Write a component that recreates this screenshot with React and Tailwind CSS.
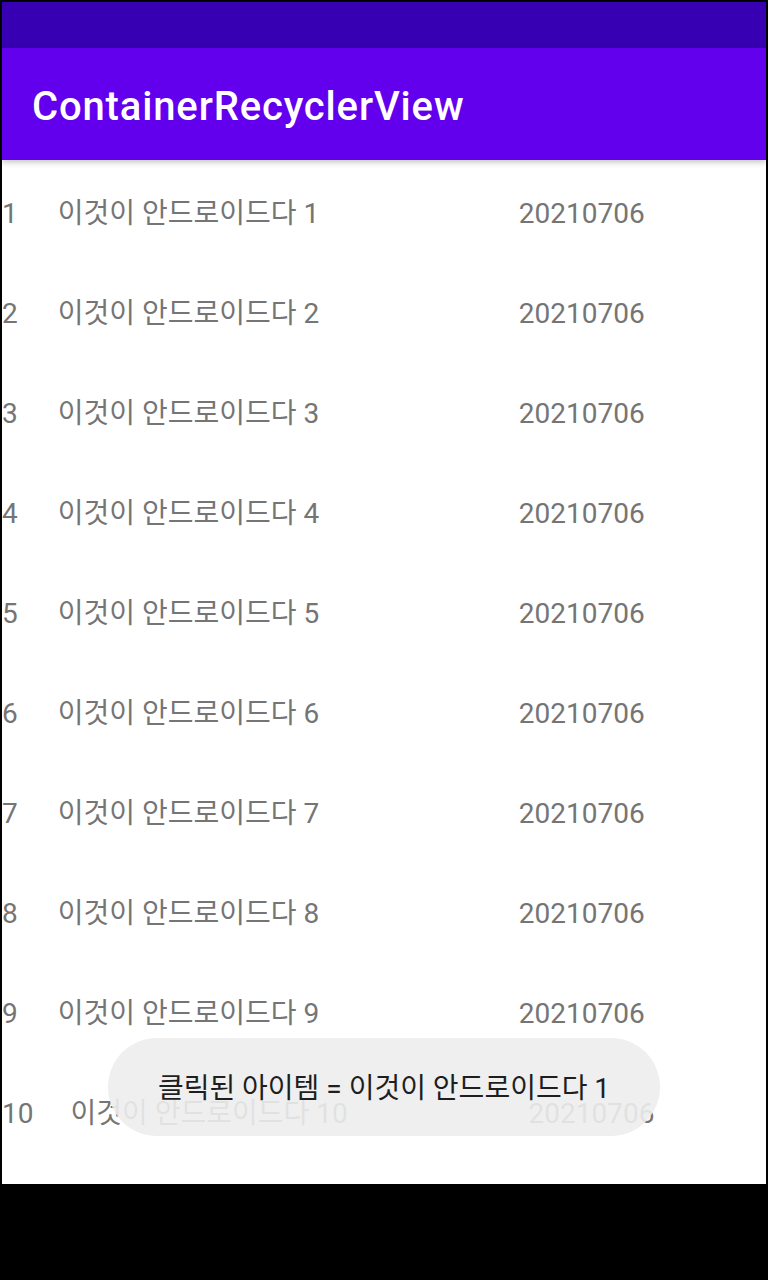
import React from "react";

const rows = Array.from({ length: 10 }, (_, i) => ({
  n: i + 1,
  titleCls: i === 9 ? "ml-[37px] w-[458px]" : "ml-[40px] w-[461px]",
}));

export default function App() {
  return (
    <div className="w-[768px] h-[1280px] bg-black pt-[2px] px-[2px] overflow-hidden" style={{ fontFamily: "Roboto, 'Noto Sans CJK KR', sans-serif" }}>
      <div className="relative w-[764px] h-[1182px] bg-white overflow-hidden">
        <div className="h-[46px] bg-[#3700b3]" />
        <div className="relative z-10 h-[112px] bg-[#6200ee] flex items-center pl-[30px] pt-[6px] shadow-[0_2px_6px_rgba(0,0,0,0.25)]">
          <span className="text-white text-[40px] font-medium leading-none tracking-[0.85px]">ContainerRecyclerView</span>
        </div>
        <div className="flex flex-col">
          {rows.map((r) => (
            <div key={r.n} className="h-[100px] flex items-start pt-[38px] text-[28px] leading-[32px] text-[#757575]">
              <span className="flex-none">{r.n}</span>
              <span className={`flex-none ${r.titleCls}`}>이것이 안드로이드다 {r.n}</span>
              <span className="flex-none">20210706</span>
            </div>
          ))}
        </div>
        <div className="absolute left-[106px] top-[1036px] w-[552px] h-[98px] rounded-full bg-[#ededed]/90 flex items-center justify-center pt-[3px]">
          <span className="text-[28px] text-[#1e1e1e] leading-none">클릭된 아이템 = 이것이 안드로이드다 1</span>
        </div>
      </div>
    </div>
  );
}
